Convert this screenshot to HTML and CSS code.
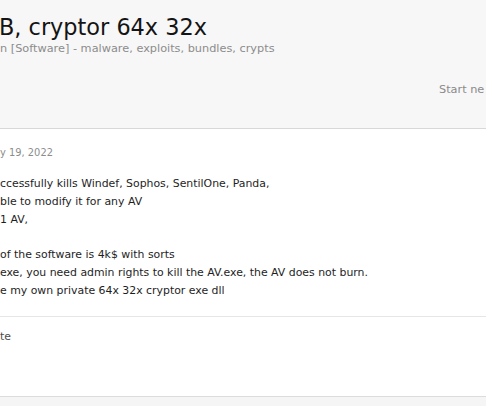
FILE: index.html
```html
<!DOCTYPE html>
<html>
<head>
<meta charset="utf-8">
<link rel="stylesheet" href="styles.css">
</head>
<body>
<div class="page">
  <header class="thread-head">
    <h1 class="title">B, cryptor 64x 32x</h1>
    <p class="desc">n [Software] - malware, exploits, bundles, crypts</p>
    <div class="actions"><span class="btn">Start ne</span></div>
  </header>
  <article class="post">
    <div class="date">y 19, 2022</div>
    <div class="body">
      <p>ccessfully kills Windef, Sophos, SentilOne, Panda,</p>
      <p>ble to modify it for any AV</p>
      <p>1 AV,</p>
      <p class="blank">&nbsp;</p>
      <p>of the software is 4k$ with sorts</p>
      <p>exe, you need admin rights to kill the AV.exe, the AV does not burn.</p>
      <p>e my own private 64x 32x cryptor exe dll</p>
    </div>
    <div class="post-foot">
      <span class="link">te</span>
    </div>
  </article>
  <div class="rest"></div>
</div>
</body>
</html>
```

FILE: styles.css
```css
html, body {
  margin: 0;
  padding: 0;
  width: 486px;
  height: 406px;
  overflow: hidden;
  background: #f5f5f5;
  font-family: "DejaVu Sans", Verdana, sans-serif;
  color: #141414;
}
.page {
  display: flex;
  flex-direction: column;
  white-space: nowrap;
}
.thread-head {
  background: #f7f7f7;
  height: 129px;
  box-sizing: border-box;
  border-bottom: 1px solid #d8d8d8;
  padding-top: 14px;
  display: flex;
  flex-direction: column;
}
.title {
  margin: 0 0 0 -1px;
  font-size: 22.4px;
  font-weight: normal;
  line-height: 27px;
  color: #141414;
}
.desc {
  margin: 0;
  font-size: 11.3px;
  line-height: 16px;
  color: #8c8c8c;
}
.actions {
  margin-top: 21px;
  padding-left: 439px;
}
.btn {
  font-size: 11.3px;
  color: #8a8a8a;
  line-height: 16px;
}
.post {
  background: #fff;
  height: 268px;
  box-sizing: border-box;
  border-bottom: 1px solid #dcdcdc;
  display: flex;
  flex-direction: column;
  padding-top: 16px;
}
.date {
  font-size: 9.9px;
  line-height: 16px;
  color: #8c8c8c;
}
.body {
  margin-top: 14px;
  font-size: 10.9px;
  line-height: 17.8px;
  color: #1e1e1e;
}
.body p {
  margin: 0;
}
.post-foot {
  margin-top: 16px;
  border-top: 1px solid #e6e6e6;
  padding-top: 8px;
}
.link {
  font-size: 10.9px;
  line-height: 16px;
  color: #4d4d4d;
}
.rest {
  height: 20px;
  background: #f5f5f5;
}
```
